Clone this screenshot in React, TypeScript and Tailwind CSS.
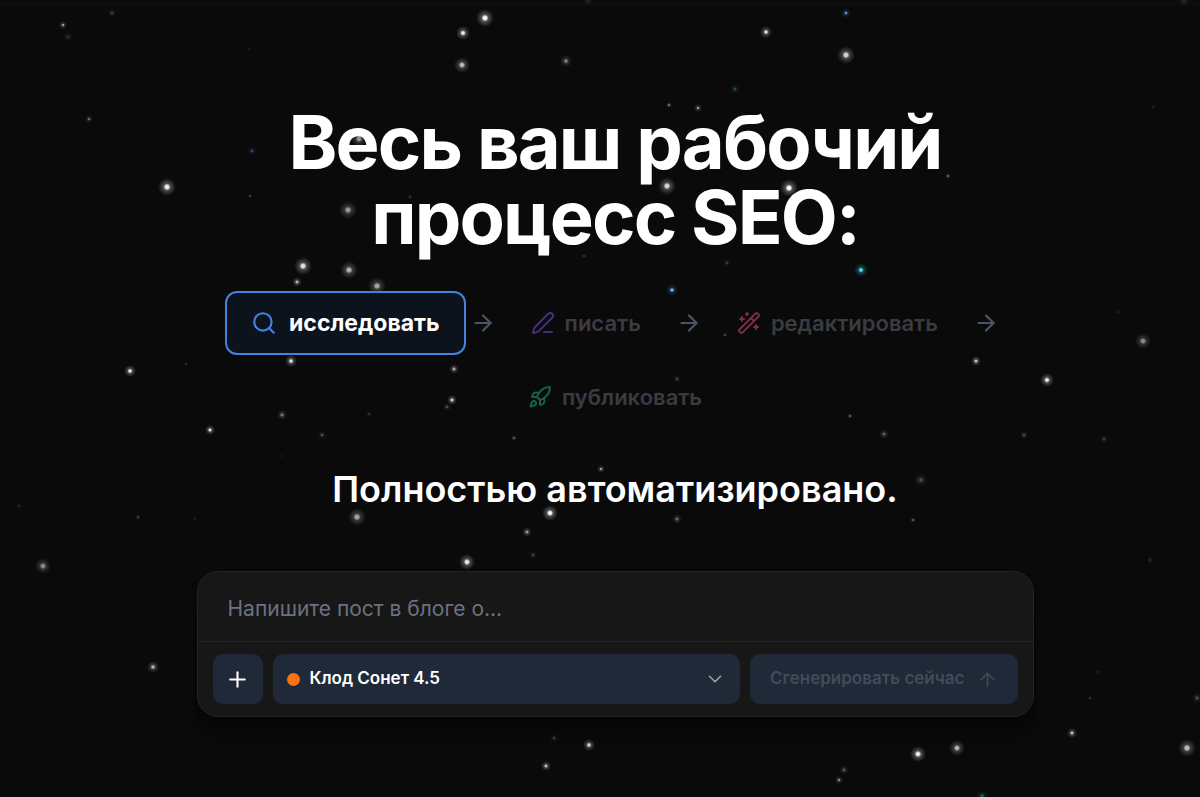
import { ArrowRight, ArrowUp, ChevronDown, PenLine, Plus, Rocket, Search, WandSparkles } from "lucide-react";

type Star = [x: number, y: number, glow: number, opacity: number, tone?: "blue" | "cyan"];

const stars: Star[] = [
  [63, 25, 4, 0.6], [112, 13, 4, 0.25], [68, 37, 5, 0.15], [249, 49, 3, 0.08], [89, 119, 4, 0.4],
  [252, 151, 5, 0.35, "blue"], [167, 187, 9, 0.95], [250, 196, 2, 0.5], [348, 210, 9, 0.6], [359, 139, 8, 0.6],
  [485, 18, 9, 1], [463, 33, 7, 0.95], [462, 65, 8, 0.75], [566, 61, 6, 0.5], [766, 32, 6, 0.9],
  [735, 89, 5, 0.3, "cyan"], [669, 105, 3, 0.5], [698, 108, 4, 0.6], [846, 13, 5, 0.7, "blue"], [846, 55, 9, 0.85],
  [667, 186, 9, 0.85], [789, 188, 9, 1], [948, 176, 3, 0.45], [727, 263, 4, 0.2], [410, 197, 3, 0.2],
  [584, 256, 3, 0.2], [861, 270, 7, 1, "cyan"], [672, 290, 6, 0.9, "blue"], [725, 335, 2, 0.6], [677, 379, 4, 0.25],
  [303, 266, 9, 0.9], [349, 270, 9, 0.7], [297, 282, 5, 0.7], [377, 286, 9, 0.65], [291, 361, 6, 0.9],
  [130, 371, 6, 0.95], [186, 364, 2, 0.25], [454, 369, 5, 0.65], [452, 400, 5, 0.85], [447, 407, 4, 0.3],
  [282, 415, 5, 0.45], [369, 414, 3, 0.2], [322, 435, 4, 0.3], [210, 430, 5, 0.9], [282, 456, 3, 0.06],
  [514, 438, 3, 0.4], [850, 416, 3, 0.4], [884, 434, 5, 0.35], [976, 361, 5, 0.8], [1047, 380, 7, 0.95],
  [1143, 341, 8, 0.55], [1118, 312, 3, 0.1], [1153, 107, 3, 0.1], [1024, 435, 4, 0.3], [1104, 439, 4, 0.25],
  [921, 480, 7, 0.25], [913, 520, 3, 0.4], [601, 469, 4, 0.6], [357, 517, 9, 0.65], [550, 513, 8, 1],
  [527, 532, 5, 0.6], [533, 555, 4, 0.25], [467, 562, 8, 0.95], [677, 519, 5, 0.4], [43, 566, 8, 0.55],
  [19, 506, 4, 0.12], [138, 517, 3, 0.25], [195, 519, 3, 0.08], [153, 667, 6, 0.7], [554, 738, 4, 0.25],
  [589, 745, 6, 0.9], [546, 766, 5, 0.75], [844, 770, 5, 0.3], [839, 780, 4, 0.55], [918, 754, 8, 1],
  [957, 748, 8, 0.75], [1072, 733, 5, 0.75], [1187, 748, 9, 0.75], [1090, 698, 2, 0.4], [1197, 698, 5, 0.3],
  [1150, 560, 4, 0.15], [1098, 672, 3, 0.1], [982, 796, 6, 0.4, "cyan"], [1184, 1, 7, 0.12], [588, 1, 7, 0.1],
];

const tones = [
  { id: "white", color: "#ffffff", core: "#ffffff" },
  { id: "blue", color: "#3b82f6", core: "#93c5fd" },
  { id: "cyan", color: "#22d3ee", core: "#5eddf0" },
];

function Starfield() {
  return (
    <svg
      aria-hidden="true"
      className="pointer-events-none absolute inset-0 h-full w-full"
      viewBox="0 0 1200 797"
      preserveAspectRatio="xMidYMid slice"
    >
      <defs>
        {tones.map((tone) => (
          <radialGradient key={tone.id} id={`glow-${tone.id}`}>
            <stop offset="0" stopColor={tone.core} stopOpacity="1" />
            <stop offset="0.18" stopColor={tone.core} stopOpacity="0.95" />
            <stop offset="0.4" stopColor={tone.color} stopOpacity="0.28" />
            <stop offset="0.7" stopColor={tone.color} stopOpacity="0.13" />
            <stop offset="1" stopColor={tone.color} stopOpacity="0" />
          </radialGradient>
        ))}
      </defs>
      {stars.map(([x, y, glow, opacity, tone = "white"]) => (
        <circle
          key={`${x}-${y}`}
          cx={x}
          cy={y}
          r={glow}
          opacity={opacity}
          fill={`url(#glow-${tone})`}
        />
      ))}
    </svg>
  );
}

const steps = [
  { label: "писать", Icon: PenLine, color: "text-[#44307a]" },
  { label: "редактировать", Icon: WandSparkles, color: "text-[#84294f]" },
  { label: "публиковать", Icon: Rocket, color: "text-[#176246]" },
];

function StepArrow() {
  return <ArrowRight size={26} className="shrink-0 text-[#4b5563]" aria-hidden="true" />;
}

function Workflow() {
  return (
    <div className="flex max-w-[800px] flex-wrap items-center justify-center gap-[10px]">
      <button
        type="button"
        className="-mx-[6px] flex h-16 items-center gap-3 rounded-xl border-2 border-[#4382df] bg-[#0d131c] px-6 text-[23px] font-bold text-white"
      >
        <Search size={26} className="text-[#4382df]" />
        исследовать
      </button>
      <StepArrow />
      {steps.map(({ label, Icon, color }, index) => (
        <div key={label} className="contents">
          <button
            type="button"
            className="flex h-16 items-center gap-[10px] px-[25px] text-[22px] font-semibold text-[#3b3b42]"
          >
            <Icon size={24} className={color} />
            {label}
          </button>
          {index < steps.length - 1 && <StepArrow />}
        </div>
      ))}
    </div>
  );
}

function Composer() {
  return (
    <form
      className="w-full max-w-[837px] rounded-[21px] border border-[#212327] bg-[#171717] shadow-xl shadow-black/40"
      onSubmit={(event) => event.preventDefault()}
    >
      <input
        type="text"
        aria-label="Тема поста"
        placeholder="Напишите пост в блоге о..."
        className="block h-[69px] w-full rounded-t-[20px] bg-transparent px-[30px] pt-1 text-[21px] text-white outline-none placeholder:text-[#6b7280]"
      />
      <div className="flex gap-[10px] border-t border-[#222326] px-[15px] pt-3 pb-3">
        <button
          type="button"
          aria-label="Добавить"
          className="flex size-[50px] shrink-0 items-center justify-center rounded-[10px] bg-[#1f2937] text-white"
        >
          <Plus size={25} />
        </button>
        <div className="relative min-w-0 flex-1">
          <select
            aria-label="Модель"
            className="h-[50px] w-full appearance-none rounded-[10px] bg-[#1f2937] pr-12 pl-[37px] text-[17px] font-semibold text-white outline-none"
          >
            <option>Клод Сонет 4.5</option>
          </select>
          <span className="pointer-events-none absolute inset-y-0 left-[14px] flex items-center">
            <span className="size-[13px] rounded-full bg-[#f97316]" />
          </span>
          <span className="pointer-events-none absolute inset-y-0 right-[14px] flex items-center text-[#9ca3af]">
            <ChevronDown size={22} strokeWidth={1.75} />
          </span>
        </div>
        <button
          type="submit"
          disabled
          className="flex h-[50px] shrink-0 items-center gap-3 rounded-[10px] bg-[#1f2937] px-5 text-[17px] font-semibold text-[#414b59]"
        >
          Сгенерировать сейчас
          <ArrowUp size={21} strokeWidth={1.75} />
        </button>
      </div>
    </form>
  );
}

export default function App() {
  return (
    <div className="relative min-h-screen overflow-hidden bg-[#0a0a0a] font-['Inter',sans-serif]">
      <div className="h-1 border-b border-[#111114] bg-[#0a0a0c]" />
      <Starfield />
      <main className="relative flex flex-col items-center pt-[101px] pr-[18px] pb-[76px] pl-12">
        <h1 className="max-w-[800px] text-center text-[74px] leading-[75px] font-bold tracking-tight text-white">
          Весь ваш рабочий процесс SEO:
        </h1>
        <div className="mt-9">
          <Workflow />
        </div>
        <p className="mt-9 text-center text-4xl leading-[48px] font-semibold text-white">
          Полностью автоматизировано.
        </p>
        <div className="mt-[58px] flex w-full justify-center">
          <Composer />
        </div>
      </main>
    </div>
  );
}
